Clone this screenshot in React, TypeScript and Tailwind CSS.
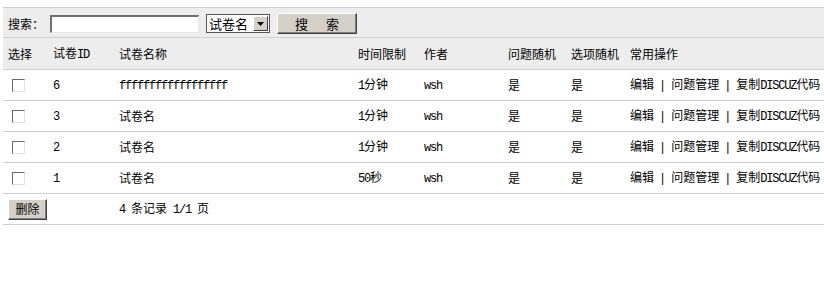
import React from 'react';

// Latin runs in the old bitmap font are half-width (6px at 12px)
const M = ({ children }: { children: React.ReactNode }) => (
  <span className="font-['Liberation_Mono',monospace] text-[12px] tracking-[-1.2px]">{children}</span>
);

const Bar = () => <span className="mx-[7px] font-['Liberation_Sans',sans-serif] text-black">|</span>;

const cols = ['w-[45px]', 'w-[66px]', 'w-[239px]', 'w-[66px]', 'w-[84px]', 'w-[63px]', 'w-[59px]', 'w-[200px]'];

const papers = [
  { id: '6', name: 'ffffffffffffffffff', latin: true, limit: '1', unit: '分钟' },
  { id: '3', name: '试卷名', latin: false, limit: '1', unit: '分钟' },
  { id: '2', name: '试卷名', latin: false, limit: '1', unit: '分钟' },
  { id: '1', name: '试卷名', latin: false, limit: '50', unit: '秒' },
];

const Cell = ({ i, children }: { i: number; children?: React.ReactNode }) => (
  <div className={`${cols[i]} shrink-0 pl-[5px] flex items-center whitespace-nowrap`}>
    <span>{children}</span>
  </div>
);

export default function App() {
  return (
    <div className="w-[824px] h-[287px] bg-white overflow-hidden pt-[7px] pl-[3px] text-[12px] leading-none text-black font-['Noto_Sans_CJK_SC','Liberation_Sans',sans-serif]">
      <div className="w-[821px] border-t border-[#cfcfcf]">
        {/* search bar */}
        <div className="h-[30px] bg-[#ededed] border-b border-[#cfcfcf] flex items-center pl-[5px]">
          <span className="mt-[3px]">搜索：</span>
          <div className="ml-[6px] mt-[3px] w-[149px] h-[18px] bg-white border-t-2 border-l-2 border-t-[#6f6f6f] border-l-[#6f6f6f] border-b border-r border-b-[#e8e8e8] border-r-[#e8e8e8]" />
          <div className="ml-[7px] mt-[2px] w-[64px] h-[19px] bg-white border border-[#555] flex items-center justify-between pl-[2px] pr-[1px]">
            <span className="text-[13px]">试卷名</span>
            <div className="w-[15px] h-[15px] bg-[#d4d0c8] border border-t-white border-l-white border-b-[#404040] border-r-[#404040] flex items-center justify-center">
              <svg width="7" height="4" viewBox="0 0 7 4"><path d="M0 0h7L3.5 4z" fill="#000" /></svg>
            </div>
          </div>
          <button className="ml-[7px] mt-[2px] w-[80px] h-[21px] bg-[#d4d0c8] border border-t-white border-l-white border-b-[#404040] border-r-[#404040] shadow-[inset_-1px_-1px_0_#808080] text-[13px] flex items-center justify-center">
            搜<span className="inline-block w-[18px]" />索
          </button>
        </div>
        {/* header */}
        <div className="h-[32px] bg-[#ededed] border-b border-[#cfcfcf] flex">
          <Cell i={0}>选择</Cell>
          <Cell i={1}>试卷<M>ID</M></Cell>
          <Cell i={2}>试卷名称</Cell>
          <Cell i={3}>时间限制</Cell>
          <Cell i={4}>作者</Cell>
          <Cell i={5}>问题随机</Cell>
          <Cell i={6}>选项随机</Cell>
          <Cell i={7}>常用操作</Cell>
        </div>
        {papers.map((p) => (
          <div key={p.id} className="h-[31px] border-b border-[#cfcfcf] flex">
            <div className="w-[45px] shrink-0 pl-[9px] flex items-center">
              <div className="w-[13px] h-[13px] bg-white border border-t-[#6a6a6a] border-l-[#6a6a6a] border-b-[#e0e0e0] border-r-[#e0e0e0]" />
            </div>
            <Cell i={1}><M>{p.id}</M></Cell>
            <Cell i={2}>{p.latin ? <M>{p.name}</M> : p.name}</Cell>
            <Cell i={3}><M>{p.limit}</M>{p.unit}</Cell>
            <Cell i={4}><M>wsh</M></Cell>
            <Cell i={5}>是</Cell>
            <Cell i={6}>是</Cell>
            <Cell i={7}>
              编辑<Bar />问题管理<Bar />复制<M>DISCUZ</M>代码
            </Cell>
          </div>
        ))}
        {/* footer */}
        <div className="h-[31px] border-b border-[#cfcfcf] flex items-center">
          <div className="w-[111px] shrink-0 pl-[5px] flex items-center">
            <button className="w-[39px] h-[21px] bg-[#d4d0c8] border border-t-white border-l-white border-b-[#404040] border-r-[#404040] shadow-[inset_-1px_-1px_0_#808080] text-[12px] flex items-center justify-center">
              删除
            </button>
          </div>
          <div className="pl-[5px] whitespace-nowrap">
            <M>4</M>
            <span className="ml-[6px]">条记录</span>
            <span className="ml-[6px]"><M>1/1</M></span>
            <span className="ml-[6px]">页</span>
          </div>
        </div>
      </div>
    </div>
  );
}
